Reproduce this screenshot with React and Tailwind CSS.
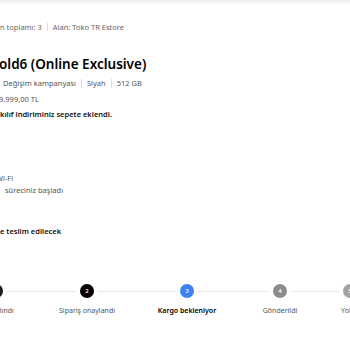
export default function App() {
  const steps = [
    { n: "1", label: "Sipariş alındı", circle: "bg-[#1a1a1a]", text: "text-[#555]" },
    { n: "2", label: "Sipariş onaylandı", circle: "bg-[#000]", text: "text-[#555]" },
    { n: "3", label: "Kargo bekleniyor", circle: "bg-[#3d82f0]", text: "text-[#000] font-semibold" },
    { n: "4", label: "Gönderildi", circle: "bg-[#8c8c8c]", text: "text-[#555]" },
    { n: "5", label: "Yolda", circle: "bg-[#a3a3a3]", text: "text-[#555]" },
  ];
  const lines = ["w-[69px]", "w-[78px]", "w-[71px]", "w-[48px]"];
  const labelOffsets = ["ml-[-7px]", "ml-[94px]", "ml-[100px]", "ml-[93px]", "ml-[70px]"];
  return (
    <div
      className="w-[350px] h-[350px] bg-white overflow-hidden text-[#000]"
      style={{ fontFamily: '"Noto Sans", "Open Sans", sans-serif' }}
    >
      <div className="h-[2px] bg-[#eeeeee]" />
      <div className="h-[2px] bg-[#f8f8f8]" />

      <div className="mt-[18px] h-[10px] flex items-center text-[7.5px] leading-[10px] text-[#666] whitespace-nowrap">
        <span>n toplamı: 3</span>
        <span className="mx-[5px] h-[8px] w-px bg-[#dddddd]" />
        <span>Alan: Toko TR Estore</span>
      </div>

      <div className="mt-[22px] h-[20px] ml-[-1px] text-[13.5px] leading-[20px] font-semibold whitespace-nowrap">
        old6 (Online Exclusive)
      </div>

      <div className="mt-[4px] h-[10px] ml-[3px] flex items-center text-[7.5px] leading-[10px] text-[#555] whitespace-nowrap">
        <span>Değişim kampanyası</span>
        <span className="mx-[5px] h-[9px] w-px bg-[#dddddd]" />
        <span>Siyah</span>
        <span className="mx-[5px] h-[9px] w-px bg-[#dddddd]" />
        <span>512 GB</span>
      </div>

      <div className="mt-[6px] h-[10px] ml-[-1px] text-[7.5px] leading-[10px] text-[#555] whitespace-nowrap">
        9.999,00 TL
      </div>

      <div className="mt-[5px] h-[10px] text-[7.5px] leading-[10px] font-semibold text-[#111] whitespace-nowrap">
        kılıf indiriminiz sepete eklendi.
      </div>

      <div className="mt-[54px] h-[10px] ml-[-4px] text-[7.5px] leading-[10px] text-[#555] whitespace-nowrap">
        Wi-Fi
      </div>
      <div className="mt-[2px] h-[10px] ml-[5px] text-[7.5px] leading-[10px] text-[#555] whitespace-nowrap">
        süreciniz başladı
      </div>

      <div className="mt-[31px] h-[10px] text-[7.5px] leading-[10px] font-semibold text-[#111] whitespace-nowrap">
        e teslim edilecek
      </div>

      <div className="mt-[48px] ml-[-11px] flex items-center gap-[4px]">
        {steps.map((s, i) => (
          <div key={s.n} className="flex items-center gap-[4px]">
            <div
              className={`w-[14px] h-[14px] rounded-full ${s.circle} flex items-center justify-center text-white text-[6px] leading-none font-semibold shrink-0`}
            >
              {s.n}
            </div>
            {i < lines.length && <div className={`${lines[i]} h-px bg-[#e6e6e6] shrink-0`} />}
          </div>
        ))}
      </div>

      <div className="mt-[8px] h-[10px] flex">
        {steps.map((s, i) => (
          <div key={s.n} className={`${labelOffsets[i]} w-0 flex justify-center shrink-0`}>
            <span className={`whitespace-nowrap text-[7px] leading-[10px] ${s.text}`}>{s.label}</span>
          </div>
        ))}
      </div>
    </div>
  );
}
